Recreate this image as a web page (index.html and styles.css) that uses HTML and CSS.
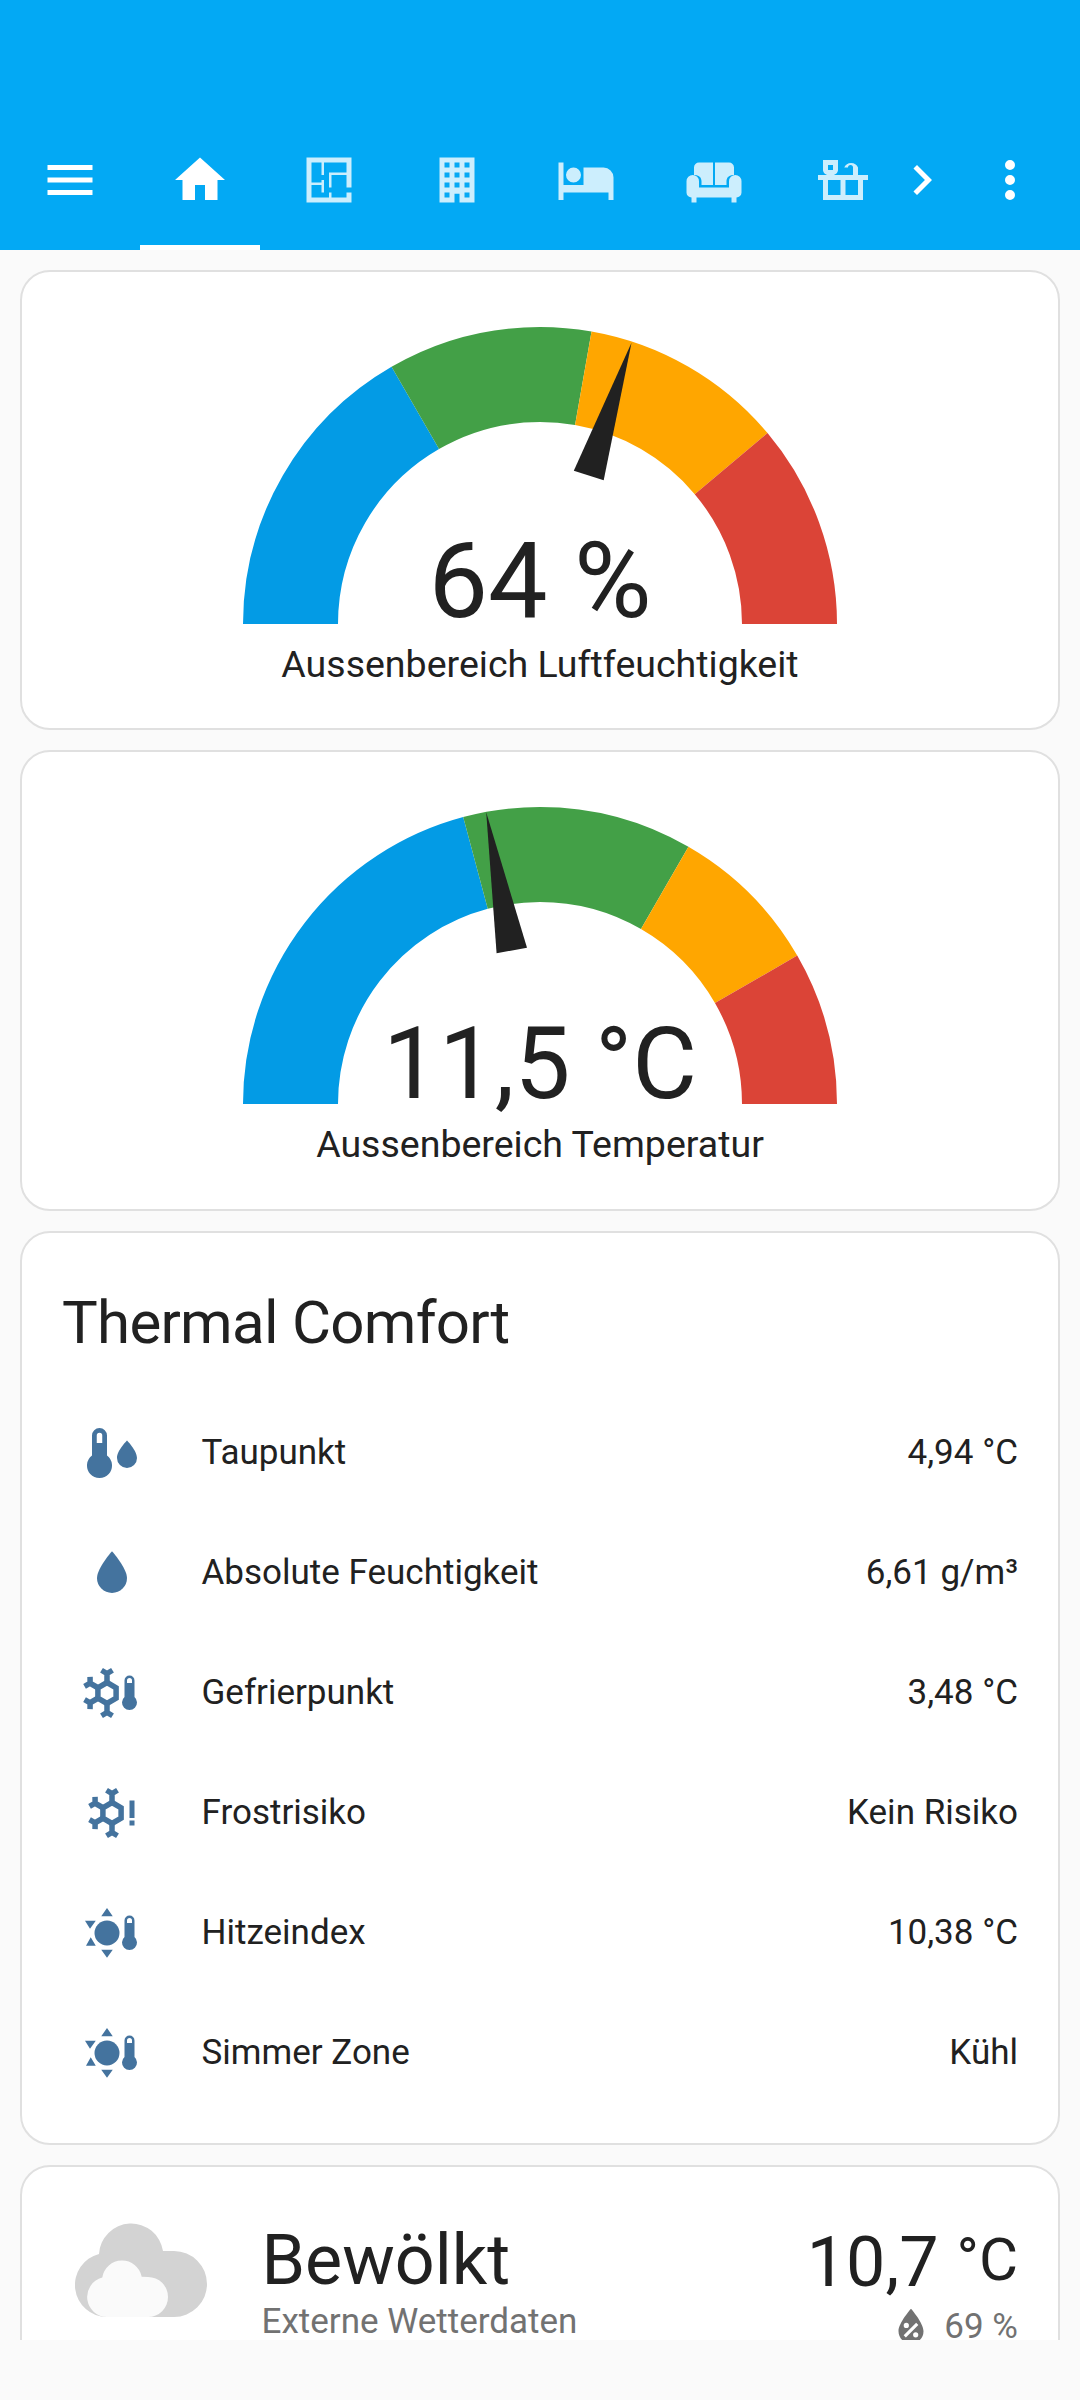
FILE: index.html
```html
<!DOCTYPE html>
<html lang="de">
<head>
    <meta charset="UTF-8">
    <meta name="viewport" content="width=device-width, initial-scale=1.0">
    <title>Home Assistant</title>
    <link rel="stylesheet" href="styles.css">
</head>
<body>
    <svg class="sprites" width="0" height="0">
        <symbol id="flake" viewBox="0 0 24 24">
            <g class="flake-lines">
                <path d="M10 7.8L13.64 9.9V14.1L10 16.2L6.36 14.1V9.9Z"/>
                <path id="arm" d="M10 7.8V4.2M7.8 2.9L10 4.2L12.2 2.9"/>
                <path d="M10 7.8V4.2M7.8 2.9L10 4.2L12.2 2.9" transform="rotate(-60 10 12)"/>
                <path d="M10 7.8V4.2M7.8 2.9L10 4.2L12.2 2.9" transform="rotate(-120 10 12)"/>
                <path d="M10 7.8V4.2M7.8 2.9L10 4.2L12.2 2.9" transform="rotate(180 10 12)"/>
            </g>
        </symbol>
        <symbol id="small-thermo" viewBox="0 0 24 24">
            <path fill-rule="evenodd" d="M17 7A2 2 0 0 1 21 7V13.6A3 3 0 1 1 17 13.6ZM18 8H20V7A1 1 0 0 0 18 7Z"/>
        </symbol>
        <symbol id="sun-thermo" viewBox="0 0 24 24">
            <circle cx="10" cy="12" r="5"/>
            <path d="M10 2L12.3 5.3H7.7ZM10 21.9L12.3 18.7H7.7ZM1.2 7.1H5.5L3.2 10.3ZM1.6 17.1H5.5L3.5 13.7Z"/>
            <path fill-rule="evenodd" d="M17 7A2 2 0 0 1 21 7V13.6A3 3 0 1 1 17 13.6ZM18 8H20V7A1 1 0 0 0 18 7Z"/>
        </symbol>
    </svg>

    <header class="app-header">
        <div class="toolbar">
            <svg class="icon" viewBox="0 0 24 24"><path d="M3,6H21V8H3V6M3,11H21V13H3V11M3,16H21V18H3V16Z"/></svg>
            <nav class="tabs">
                <div class="tab active">
                    <svg class="icon" viewBox="0 0 24 24"><path d="M10,20V14H14V20H19V12H22L12,3L2,12H5V20H10Z"/></svg>
                </div>
                <div class="tab">
                    <svg class="icon" viewBox="0 0 24 24"><path d="M10,5V10H9V5H5V13H9V12H10V17H9V14H5V19H12V17H13V19H19V17H21V21H3V3H21V15H19V10H13V15H12V9H19V5H10Z"/></svg>
                </div>
                <div class="tab">
                    <svg class="icon" viewBox="0 0 24 24"><path d="M5,3V21H11V17.5H13V21H19V3H5M7,5H9V7H7V5M11,5H13V7H11V5M15,5H17V7H15V5M7,9H9V11H7V9M11,9H13V11H11V9M15,9H17V11H15V9M7,13H9V15H7V13M11,13H13V15H11V13M15,13H17V15H15V13M7,17H9V19H7V17M15,17H17V19H15V17Z"/></svg>
                </div>
                <div class="tab">
                    <svg class="icon" viewBox="0 0 24 24"><path d="M19,7H11V14H3V5H1V20H3V17H21V20H23V11A4,4 0 0,0 19,7M7,13A3,3 0 0,0 10,10A3,3 0 0,0 7,7A3,3 0 0,0 4,10A3,3 0 0,0 7,13Z"/></svg>
                </div>
                <div class="tab">
                    <svg class="icon" viewBox="0 0 24 24"><path d="M4 10V7A2 2 0 0 1 6 5H11.6V14H7V12.5C7 11 6 10 4 10ZM20 10V7A2 2 0 0 0 18 5H12.4V14H17V12.5C17 11 18 10 20 10ZM1 12.5A2.5 2.5 0 0 1 6 12.5V15H18V12.5A2.5 2.5 0 0 1 23 12.5V17A2 2 0 0 1 21 19H3A2 2 0 0 1 1 17ZM3 19H5V21H3ZM19 19H21V21H19Z"/></svg>
                </div>
                <div class="tab">
                    <svg class="icon" viewBox="0 0 24 24"><path fill-rule="evenodd" d="M4,4H10V8C10,9 9,10 8,10H6C5,10 4,9 4,8ZM6,6V8H8V6ZM18,10H16V7A1,1 0 0,0 14,7H12.5A3,3 0 0,1 18,7ZM2,10H22V12H20V20H4V12H2ZM6,12V18H11V12ZM13,12V18H18V12Z"/></svg>
                </div>
            </nav>
            <svg class="icon chevron" viewBox="0 0 24 24"><path d="M8.59,16.58L13.17,12L8.59,7.41L10,6L16,12L10,18L8.59,16.58Z"/></svg>
            <svg class="icon" viewBox="0 0 24 24"><path d="M12,16A2,2 0 0,1 14,18A2,2 0 0,1 12,20A2,2 0 0,1 10,18A2,2 0 0,1 12,16M12,10A2,2 0 0,1 14,12A2,2 0 0,1 12,14A2,2 0 0,1 10,12A2,2 0 0,1 12,10M12,4A2,2 0 0,1 14,6A2,2 0 0,1 12,8A2,2 0 0,1 10,6A2,2 0 0,1 12,4Z"/></svg>
        </div>
    </header>

    <main class="view">
        <section class="card gauge-card">
            <svg class="gauge" viewBox="0 0 594 297">
                <g class="arc">
                    <path class="seg-blue" pathLength="180" stroke-dasharray="60 360" stroke-dashoffset="0" d="M47.5 297A249.5 249.5 0 0 1 546.5 297"/>
                    <path class="seg-green" pathLength="180" stroke-dasharray="40 360" stroke-dashoffset="-60" d="M47.5 297A249.5 249.5 0 0 1 546.5 297"/>
                    <path class="seg-orange" pathLength="180" stroke-dasharray="40 360" stroke-dashoffset="-100" d="M47.5 297A249.5 249.5 0 0 1 546.5 297"/>
                    <path class="seg-red" pathLength="180" stroke-dasharray="40 360" stroke-dashoffset="-140" d="M47.5 297A249.5 249.5 0 0 1 546.5 297"/>
                </g>
                <polygon class="needle" points="388.5,15.7 360.7,153.3 330.8,143.7"/>
                <text class="gauge-value large" x="297" y="290">64 %</text>
            </svg>
            <div class="gauge-name">Aussenbereich Luftfeuchtigkeit</div>
        </section>

        <section class="card gauge-card">
            <svg class="gauge" viewBox="0 0 594 297">
                <g class="arc">
                    <path class="seg-blue" pathLength="180" stroke-dasharray="75 360" stroke-dashoffset="0" d="M47.5 297A249.5 249.5 0 0 1 546.5 297"/>
                    <path class="seg-green" pathLength="180" stroke-dasharray="45 360" stroke-dashoffset="-75" d="M47.5 297A249.5 249.5 0 0 1 546.5 297"/>
                    <path class="seg-orange" pathLength="180" stroke-dasharray="30 360" stroke-dashoffset="-120" d="M47.5 297A249.5 249.5 0 0 1 546.5 297"/>
                    <path class="seg-red" pathLength="180" stroke-dasharray="30 360" stroke-dashoffset="-150" d="M47.5 297A249.5 249.5 0 0 1 546.5 297"/>
                </g>
                <polygon class="needle" points="243.2,5.3 284,140.7 253.6,146.3"/>
                <text class="gauge-value" x="297" y="291">11,5 °C</text>
            </svg>
            <div class="gauge-name">Aussenbereich Temperatur</div>
        </section>

        <section class="card entities">
            <h2 class="card-title">Thermal Comfort</h2>
            <div class="rows">
                <div class="row">
                    <svg class="state-icon" viewBox="0 0 24 24"><path fill-rule="evenodd" d="M4 5A3 3 0 0 1 10 5V13A5 5 0 1 1 4 13ZM5.9 8H8.1V5A1.1 1.1 0 0 0 5.9 5ZM18 18A4 4 0 0 1 14 14C14 11 18 7 18 7C18 7 22 11 22 14A4 4 0 0 1 18 18Z"/></svg>
                    <span class="row-name">Taupunkt</span>
                    <span class="row-value">4,94 °C</span>
                </div>
                <div class="row">
                    <svg class="state-icon" viewBox="0 0 24 24"><path d="M12,20A6,6 0 0,1 6,14C6,10 12,3.25 12,3.25C12,3.25 18,10 18,14A6,6 0 0,1 12,20Z"/></svg>
                    <span class="row-name">Absolute Feuchtigkeit</span>
                    <span class="row-value">6,61 g/m³</span>
                </div>
                <div class="row">
                    <svg class="state-icon" viewBox="0 0 24 24"><use href="#flake"/><use href="#small-thermo"/></svg>
                    <span class="row-name">Gefrierpunkt</span>
                    <span class="row-value">3,48 °C</span>
                </div>
                <div class="row">
                    <svg class="state-icon" viewBox="0 0 24 24"><use href="#flake" x="2"/><path d="M19 7H21V14H19ZM19 15H21V17H19Z"/></svg>
                    <span class="row-name">Frostrisiko</span>
                    <span class="row-value">Kein Risiko</span>
                </div>
                <div class="row">
                    <svg class="state-icon" viewBox="0 0 24 24"><use href="#sun-thermo"/></svg>
                    <span class="row-name">Hitzeindex</span>
                    <span class="row-value">10,38 °C</span>
                </div>
                <div class="row">
                    <svg class="state-icon" viewBox="0 0 24 24"><use href="#sun-thermo"/></svg>
                    <span class="row-name">Simmer Zone</span>
                    <span class="row-value">Kühl</span>
                </div>
            </div>
        </section>

        <section class="card weather">
            <svg class="cloud" viewBox="0 0 132 94">
                <path class="cloud-back" d="M32 94A32 32 0 0 1 24 31A32.2 32.2 0 0 1 88 28L99 28A33 33 0 0 1 99 94Z"/>
                <path class="cloud-front" d="M32 94A20 20 0 0 1 27.3 54.6A20 20 0 0 1 66.7 53.7L73 54A20 20 0 0 1 73 94Z"/>
            </svg>
            <div class="weather-info">
                <div class="weather-state">Bewölkt</div>
                <div class="weather-source">Externe Wetterdaten</div>
            </div>
            <div class="weather-side">
                <div class="weather-temp">10,7<span class="temp-unit">°C</span></div>
                <div class="weather-humidity">
                    <svg class="humidity-icon" viewBox="0 0 24 24"><path d="M12,3.25C12,3.25 6,10 6,14C6,17.32 8.69,20 12,20A6,6 0 0,0 18,14C18,10 12,3.25 12,3.25M14.47,9.97L15.53,11.03L9.53,17.03L8.47,15.97M9.75,10A1.25,1.25 0 0,1 11,11.25A1.25,1.25 0 0,1 9.75,12.5A1.25,1.25 0 0,1 8.5,11.25A1.25,1.25 0 0,1 9.75,10M14.25,14.5A1.25,1.25 0 0,1 15.5,15.75A1.25,1.25 0 0,1 14.25,17A1.25,1.25 0 0,1 13,15.75A1.25,1.25 0 0,1 14.25,14.5Z"/></svg>
                    <span>69 %</span>
                </div>
            </div>
        </section>
    </main>
</body>
</html>
```

FILE: styles.css
```css
/* General Styles */
html, body {
    margin: 0;
    padding: 0;
    height: 2400px;
    overflow: hidden;
}

body {
    font-family: Roboto, sans-serif;
    background-color: #fafafa;
    color: #212121;
}

.sprites {
    display: block;
    height: 0;
}

/* Header */
.app-header {
    background-color: #03a9f4;
    padding-top: 110px;
    color: #ffffff;
}

.toolbar {
    display: flex;
    align-items: center;
    height: 140px;
    padding: 0 40px;
}

.icon {
    flex: none;
    display: block;
    width: 60px;
    height: 60px;
    fill: currentColor;
}

.tabs {
    display: flex;
    flex: none;
    gap: 8.6px;
    width: 751.5px;
    margin-left: 40px;
    overflow: hidden;
}

.tab {
    flex: none;
    display: flex;
    align-items: center;
    justify-content: center;
    width: 120px;
    height: 140px;
    color: rgba(255, 255, 255, 0.8);
}

.tab.active {
    color: #ffffff;
    box-shadow: inset 0 -5px 0 #ffffff;
}

.chevron {
    margin-right: 28.5px;
}

/* Cards */
.view {
    display: flex;
    flex-direction: column;
    gap: 20px;
    height: 2090px;
    padding: 20px 20px 0;
    box-sizing: border-box;
    overflow: hidden;
}

.card {
    flex: none;
    box-sizing: border-box;
    background-color: #ffffff;
    border: 2.5px solid #e0e0e0;
    border-radius: 30px;
}

/* Gauges */
.gauge-card {
    height: 460.4px;
    padding-top: 55px;
    text-align: center;
}

.gauge {
    display: block;
    width: 594px;
    height: 297px;
    margin: 0 auto;
    overflow: visible;
}

.arc path {
    fill: none;
    stroke-width: 95;
}

.seg-blue { stroke: #039be5; }
.seg-green { stroke: #43a047; }
.seg-orange { stroke: #ffa600; }
.seg-red { stroke: #db4437; }

.needle {
    fill: #212121;
}

.gauge-value {
    font-size: 99.5px;
    fill: #212121;
    text-anchor: middle;
}

.gauge-value.large {
    font-size: 106px;
}

.gauge-name {
    margin-top: 15px;
    font-size: 37.5px;
    line-height: 50px;
}

/* Thermal Comfort */
.entities {
    height: 913.8px;
    padding: 0 40px;
}

.card-title {
    margin: 0;
    padding: 50.3px 0 29.5px;
    font-size: 60px;
    font-weight: 400;
    letter-spacing: -0.72px;
    line-height: 80px;
}

.row {
    display: flex;
    align-items: center;
    height: 120px;
    font-size: 35px;
}

.state-icon {
    flex: none;
    width: 60px;
    height: 60px;
    margin: 0 59.5px 0 20px;
    fill: #44739e;
}

.flake-lines {
    fill: none;
    stroke: #44739e;
    stroke-width: 2.2;
}

.row-name {
    flex: 1;
}

/* Weather */
.weather {
    display: flex;
    align-items: flex-start;
    height: 400px;
    padding: 56px 40px 0 52.5px;
}

.cloud {
    flex: none;
    width: 132px;
    height: 94px;
    margin-right: 55px;
}

.cloud-back { fill: #d3d3d3; }
.cloud-front { fill: #fafafa; }

.weather-info {
    flex: 1;
}

.weather-state {
    margin-top: -3px;
    font-size: 70px;
    line-height: 80px;
}

.weather-source {
    margin-top: -3px;
    font-size: 35px;
    line-height: 50px;
    color: #727272;
}

.weather-side {
    margin-top: -3px;
    text-align: right;
}

.weather-temp {
    font-size: 70px;
    line-height: 80px;
}

.temp-unit {
    margin-left: 18px;
    font-size: 60px;
    vertical-align: 6px;
}

.weather-humidity {
    display: flex;
    align-items: center;
    justify-content: flex-end;
    font-size: 35px;
    line-height: 50px;
    color: #727272;
}

.humidity-icon {
    width: 50px;
    height: 50px;
    margin-right: 8px;
    fill: #727272;
}
```
